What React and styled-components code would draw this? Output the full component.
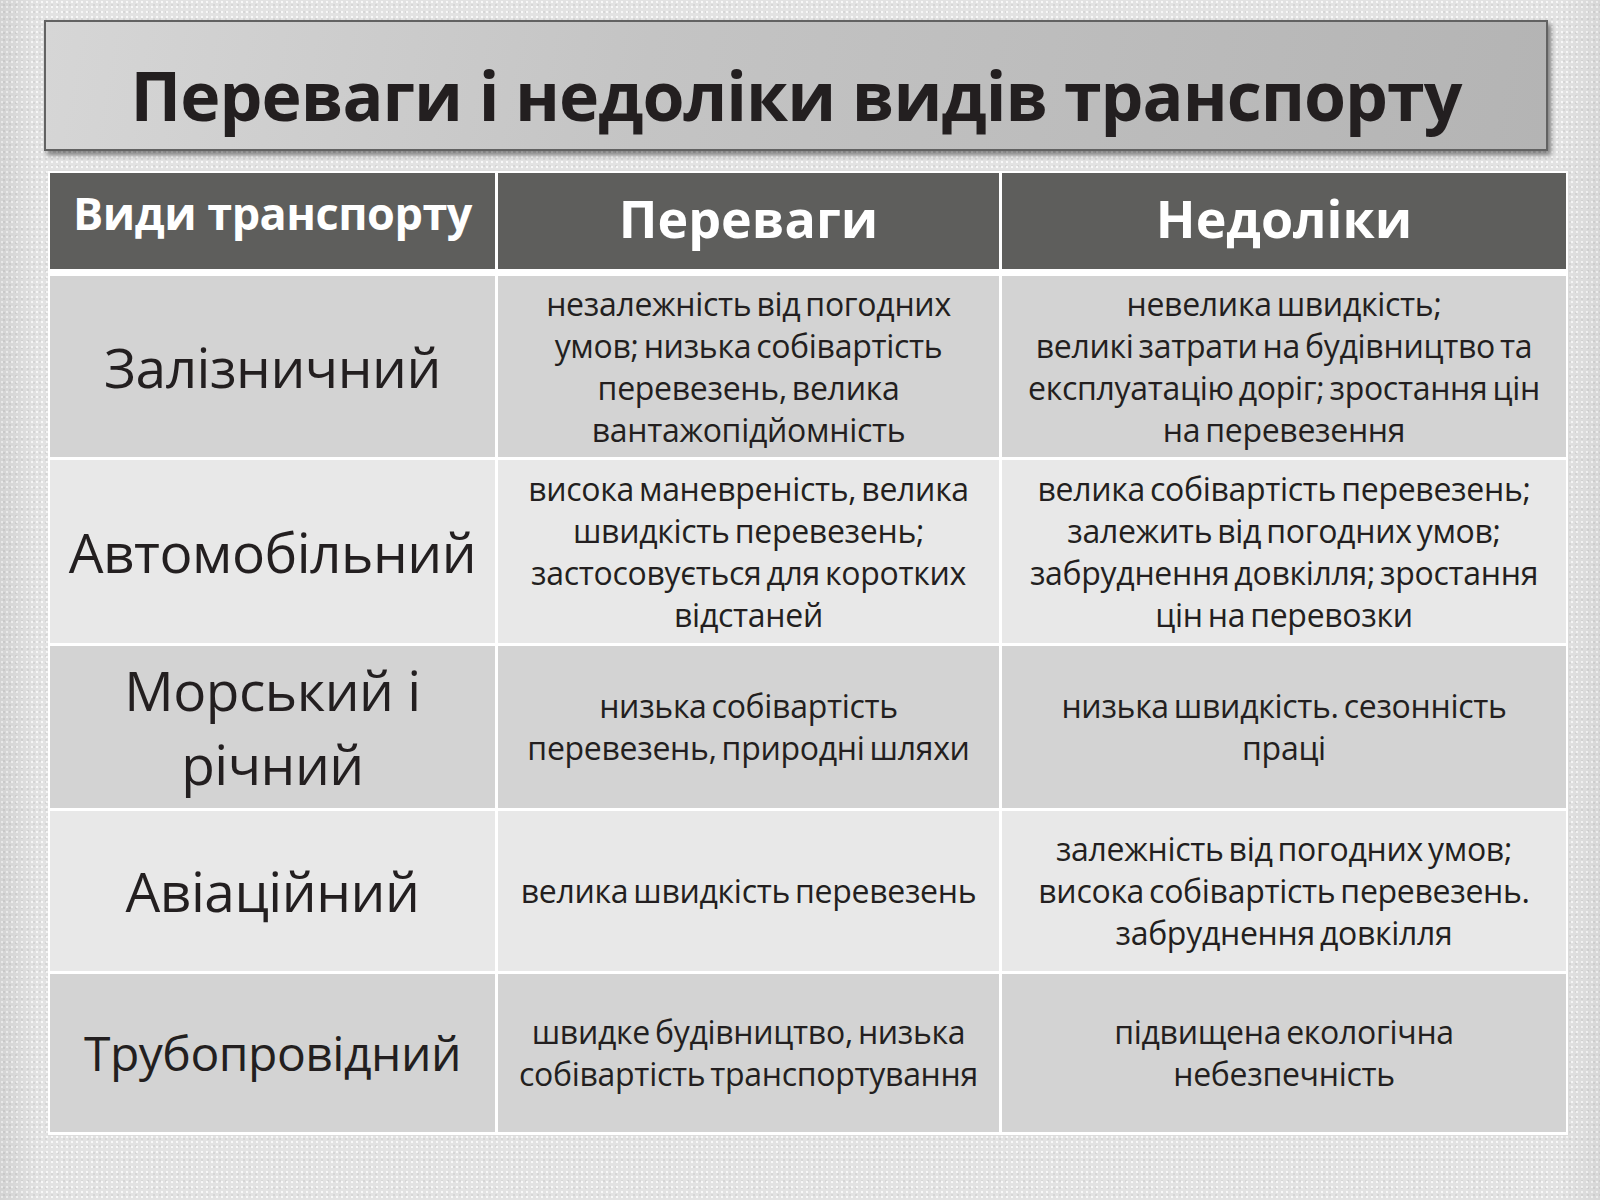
import React from "react";
import styled, { createGlobalStyle } from "styled-components";

const GlobalStyle = createGlobalStyle`
  html, body {
    margin: 0;
    padding: 0;
  }
  body {
    font-family: "Open Sans", "Noto Sans", sans-serif;
    color: #231f20;
  }
`;

const rows = [
  {
    name: ["Залізничний"],
    height: 181,
    shade: "dark",
    pros: [
      "незалежність від погодних",
      "умов; низька собівартість",
      "перевезень, велика",
      "вантажопідйомність",
    ],
    cons: [
      "невелика швидкість;",
      "великі затрати на будівництво та",
      "експлуатацію доріг; зростання цін",
      "на перевезення",
    ],
  },
  {
    name: ["Автомобільний"],
    height: 183,
    shade: "light",
    pros: [
      "висока маневреність, велика",
      "швидкість перевезень;",
      "застосовується для коротких",
      "відстаней",
    ],
    cons: [
      "велика собівартість перевезень;",
      "залежить від погодних умов;",
      "забруднення довкілля; зростання",
      "цін на перевозки",
    ],
  },
  {
    name: ["Морський і", "річний"],
    height: 162,
    shade: "dark",
    pros: ["низька собівартість", "перевезень, природні шляхи"],
    cons: ["низька швидкість. сезонність", "праці"],
  },
  {
    name: ["Авіаційний"],
    height: 160,
    shade: "light",
    pros: ["велика швидкість перевезень"],
    cons: [
      "залежність від погодних умов;",
      "висока собівартість перевезень.",
      "забруднення довкілля",
    ],
  },
  {
    name: ["Трубопровідний"],
    height: 158,
    shade: "dark",
    nameSize: 48,
    pros: ["швидке будівництво, низька", "собівартість транспортування"],
    cons: ["підвищена екологічна", "небезпечність"],
  },
];

export default function App() {
  return (
    <Slide>
      <GlobalStyle />
      <TitleBox>
        <Title>Переваги і недоліки видів транспорту</Title>
      </TitleBox>
      <Table>
        <HeadCell $small>Види транспорту</HeadCell>
        <HeadCell>Переваги</HeadCell>
        <HeadCell>Недоліки</HeadCell>
        {rows.map((row) => (
          <React.Fragment key={row.name[0]}>
            <NameCell $shade={row.shade} $h={row.height} $size={row.nameSize}>
              {row.name.map((line) => (
                <Line key={line}>{line}</Line>
              ))}
            </NameCell>
            <TextCell $shade={row.shade} $h={row.height}>
              {row.pros.map((line) => (
                <Line key={line}>{line}</Line>
              ))}
            </TextCell>
            <TextCell $shade={row.shade} $h={row.height}>
              {row.cons.map((line) => (
                <Line key={line}>{line}</Line>
              ))}
            </TextCell>
          </React.Fragment>
        ))}
      </Table>
    </Slide>
  );
}

const Slide = styled.div`
  width: 1600px;
  height: 1200px;
  box-sizing: border-box;
  padding-top: 20px;
  overflow: hidden;
  background-color: #e2e2e2;
  background-image: linear-gradient(
      to right,
      rgba(0, 0, 0, 0.07),
      rgba(0, 0, 0, 0) 40px,
      rgba(0, 0, 0, 0) 1560px,
      rgba(0, 0, 0, 0.05)
    ),
    radial-gradient(circle at 2px 2px, rgba(255, 255, 255, 0.75) 0.8px, transparent 1.6px),
    radial-gradient(circle at 4px 5px, rgba(0, 0, 0, 0.05) 0.8px, transparent 1.6px);
  background-size: 100% 100%, 5px 5px, 6px 7px;
`;

const TitleBox = styled.div`
  margin-left: 44px;
  width: 1504px;
  height: 131px;
  box-sizing: border-box;
  border: 2px solid #626262;
  background: linear-gradient(100deg, #d6d6d6 0%, #c4c4c4 40%, #b4b4b4 100%);
  box-shadow: 3px 4px 5px rgba(0, 0, 0, 0.45);
  display: flex;
  align-items: center;
  justify-content: center;
  padding-top: 18px;
`;

const Title = styled.h1`
  margin: 0;
  font-family: "Open Sans", "Noto Sans", sans-serif;
  font-weight: 700;
  font-size: 68px;
  letter-spacing: -1px;
  color: #231f20;
  white-space: nowrap;
`;

const Table = styled.div`
  margin: 20px 0 0 48px;
  width: 1520px;
  box-sizing: border-box;
  display: grid;
  grid-template-columns: 445px 501px 564px;
  grid-template-rows: 100px;
  column-gap: 3px;
  row-gap: 3px;
  border: 2px solid #ffffff;
  border-bottom-width: 3px;
  background: #ffffff;
  box-shadow: 0 0 2px rgba(0, 0, 0, 0.08);
`;

const HeadCell = styled.div`
  background: #5e5e5c;
  color: #ffffff;
  font-weight: 700;
  font-size: ${(p) => (p.$small ? "45px" : "52px")};
  letter-spacing: ${(p) => (p.$small ? "-0.5px" : "0")};
  display: flex;
  align-items: center;
  justify-content: center;
  margin-bottom: 4px;
  padding-bottom: ${(p) => (p.$small ? "18px" : "8px")};
  white-space: nowrap;
`;

const Cell = styled.div`
  height: ${(p) => p.$h}px;
  background: ${(p) => (p.$shade === "dark" ? "#d3d3d3" : "#e8e8e8")};
  display: flex;
  flex-direction: column;
  align-items: center;
  justify-content: center;
  text-align: center;
  white-space: nowrap;
`;

const NameCell = styled(Cell)`
  font-size: ${(p) => p.$size || 55}px;
  line-height: 74px;
  letter-spacing: -0.5px;
`;

const TextCell = styled(Cell)`
  font-size: 32px;
  line-height: 42px;
  letter-spacing: -0.3px;
  word-spacing: -3px;
`;

const Line = styled.span`
  display: block;
`;
